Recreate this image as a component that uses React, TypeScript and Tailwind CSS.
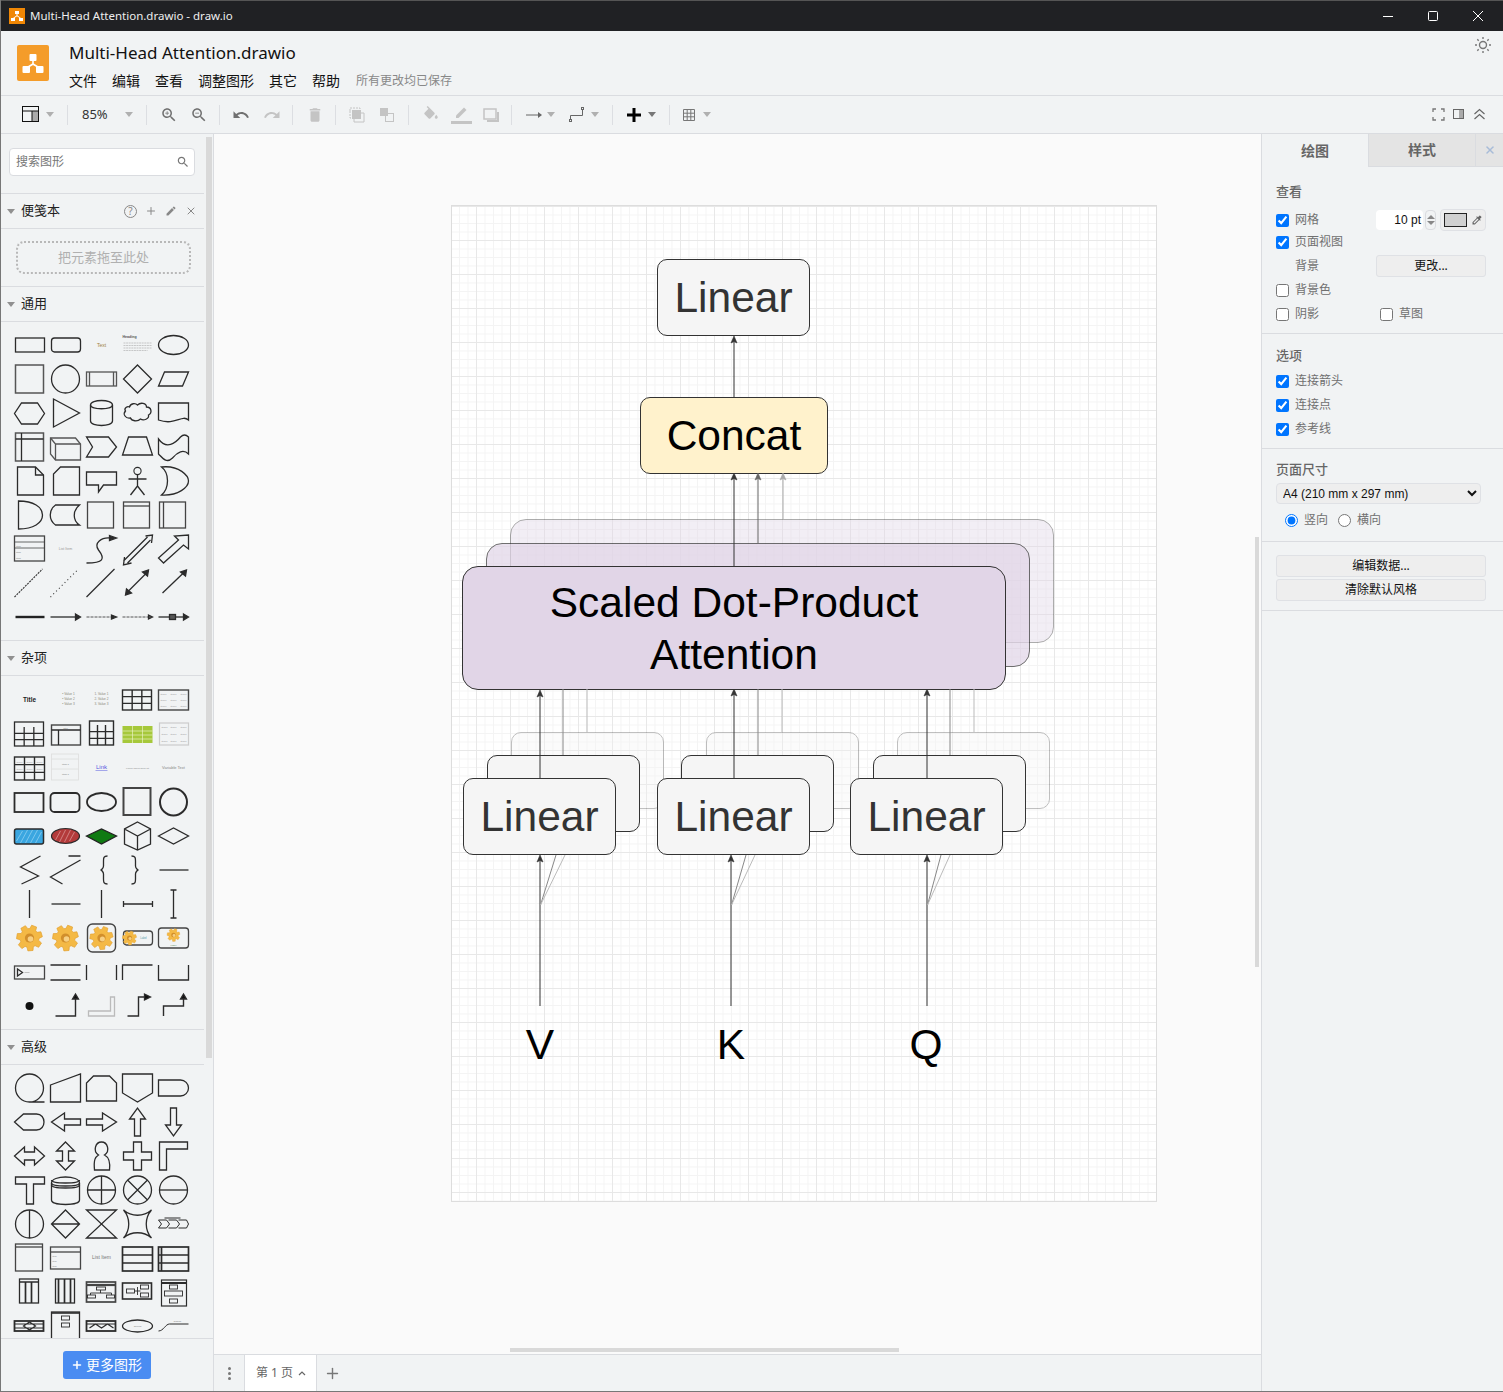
import type { ReactNode } from "react"
import { Plus, X } from "lucide-react"

const Ic = ({ d, c = "#707070", size = 18 }: { d: string; c?: string; size?: number }) => (
  <svg width={size} height={size} viewBox="0 0 24 24" fill={c}><path d={d} /></svg>
)

const Caret = ({ c = "border-t-[#b0b0b0]", className = "" }: { c?: string; className?: string }) => (
  <div className={`h-0 w-0 shrink-0 border-x-4 border-t-[5px] border-x-transparent ${c} ${className}`} />
)

const Sep = ({ className = "" }: { className?: string }) => <div className={`h-5 w-px shrink-0 bg-[#dcdee2] ${className}`} />

const Btn = ({ children, className = "" }: { children: ReactNode; className?: string }) => (
  <div className={`flex h-6 w-[30px] shrink-0 items-center justify-center ${className}`}>{children}</div>
)

const P = ({ d, w = 1.3, c = "#2b2b2b", f = "none" }: { d: string; w?: number; c?: string; f?: string }) => (
  <path d={d} stroke={c} strokeWidth={w} fill={f} />
)
const T = ({ x, y, s = 4, c = "#777", b = false, children }: { x: number; y: number; s?: number; c?: string; b?: boolean; children: ReactNode }) => (
  <text x={x} y={y} fontSize={s} fill={c} fontWeight={b ? 700 : 400} textAnchor="middle" fontFamily="Liberation Sans">{children}</text>
)
const Rc = ({ x, y, w, h, r = 0, sw = 1.3, f = "none", c = "#2b2b2b" }: { x: number; y: number; w: number; h: number; r?: number; sw?: number; f?: string; c?: string }) => (
  <rect x={x} y={y} width={w} height={h} rx={r} stroke={c} strokeWidth={sw} fill={f} />
)

const gearPath = () => {
  let d = ""
  for (let i = 0; i < 7; i++) {
    const a = (i * 2 * Math.PI) / 7 - 0.3
    const pts: [number, number][] = [[a - 0.34, 9.5], [a - 0.2, 13], [a + 0.2, 13], [a + 0.34, 9.5]]
    pts.forEach(([t, r], j) => {
      d += `${i === 0 && j === 0 ? "M" : "L"}${(18 + r * Math.cos(t)).toFixed(1)} ${(17 + r * Math.sin(t)).toFixed(1)}`
    })
  }
  return d + "Z"
}
const Gear = ({ t = "" }: { t?: string }) => (
  <g transform={t}>
    <path d={gearPath()} fill="#f4b945" stroke="#e3a02f" strokeWidth={0.7} />
    <circle cx={18} cy={17} r={4.6} fill="#d28f2b" />
    <circle cx={19} cy={18} r={2.8} fill="#f7d083" />
  </g>
)

const Grid3 = ({ x, y, w, h, sw = 1.3, top = 0 }: { x: number; y: number; w: number; h: number; sw?: number; top?: number }) => (
  <>
    <Rc x={x} y={y} w={w} h={h} sw={sw} />
    <P w={sw} d={`M${x + w / 3} ${y + top}V${y + h}M${x + (2 * w) / 3} ${y + top}V${y + h}M${x} ${y + top + (h - top) / 3}H${x + w}M${x} ${y + top + (2 * (h - top)) / 3}H${x + w}`} />
  </>
)

const general: ReactNode[] = [
  <Rc x={4} y={10} w={29} h={14} />,
  <Rc x={4} y={10} w={29} h={14} r={3} />,
  <T x={18} y={19} s={5} c="#a08040">Text</T>,
  <><T x={10} y={10} s={3.6} c="#555" b>Heading</T><path d="M4 15H32M4 17.5H32M4 20H32M4 22.5H28" stroke="#aaa" strokeWidth={0.6} strokeDasharray="2 0.6" /></>,
  <ellipse cx={18} cy={17} rx={15} ry={9.5} stroke="#2b2b2b" strokeWidth={1.3} fill="none" />,

  <Rc x={4} y={3} w={28} h={28} sw={1.5} c="#555" />,
  <circle cx={18} cy={17} r={14} stroke="#2b2b2b" strokeWidth={1.3} fill="none" />,
  <><Rc x={3} y={10} w={30} h={14} c="#555" /><P d="M6 10V24M30 10V24" c="#555" /></>,
  <P d="M18 3L32 17L18 31L4 17Z" />,
  <P d="M9 10H33L27 24H3Z" />,

  <P d="M10 7H26L33 17.5L26 28H10L3 17.5Z" />,
  <P d="M6 3L32 17L6 31Z" />,
  <><P d="M7 9C7 3 29 3 29 9V25C29 31 7 31 7 25Z" /><P d="M7 9C7 14 29 14 29 9" /></>,
  <P d="M10 11C11 7 16 7 18 9C21 6 27 7 27 11C32 11 33 17 29 19C30 23 24 25 21 23C18 26 12 25 11 22C6 23 3 18 6 15C4 12 8 10 10 11Z" />,
  <P d="M3 7H33V24C26 18 20 30 3 24Z" />,

  <><Rc x={4} y={3} w={28} h={28} sw={1.5} c="#555" /><P d="M4 9H32M10 3V31" /></>,
  <><P d="M3 8H28L33 14V30H8L3 24Z" c="#555" /><P d="M3 8L8 14V30M8 14H33" c="#555" /></>,
  <P d="M3 7H25L33 17L25 27H3L9 17Z" />,
  <P d="M9 7H27L33 25H3Z" />,
  <P d="M3 9C11 20 20 13 25 7C28 4 31 5 33 7V24C28 19 22 22 17 28C11 34 7 28 3 24Z" />,

  <><P d="M6 3H24L32 11V31H6Z" /><P d="M24 3V11H32" /></>,
  <P d="M13 3H32V31H6V10Z" />,
  <P d="M3 8H33V21H20L15 28V21H3Z" />,
  <><circle cx={18} cy={7} r={3.6} stroke="#2b2b2b" strokeWidth={1.1} fill="none" /><P d="M18 11V22M9 15H27M18 22L11 31M18 22L25 31" /></>,
  <P d="M6 3C24 1 33 12 33 17C33 23 23 32 6 31C14 24 14 9 6 3Z" />,

  <P d="M7 3C22 3 31 9 31 17C31 25 22 31 7 31Z" />,
  <P d="M8 7H32C25 13 25 22 32 27H8C1 22 1 12 8 7Z" />,
  <Rc x={4} y={4} w={26} h={26} c="#444" />,
  <><Rc x={4} y={4} w={26} h={26} c="#444" /><P d="M4 8H30" c="#444" /></>,
  <><Rc x={4} y={4} w={26} h={26} c="#444" /><P d="M8 4V30" c="#444" /></>,

  <><Rc x={3} y={4} w={30} h={25} c="#444" /><P d="M3 10H33M3 16H33" c="#444" w={0.8} /><T x={7} y={15} s={2.5}>Item</T><T x={7} y={21} s={2.5}>Item</T><T x={7} y={27} s={2.5}>Item</T></>,
  <T x={18} y={18} s={3.6} c="#999">List Item</T>,
  <><P d="M3 31C20 31 22 27 15 18C10 11 18 5 27 6" /><P d="M26 3.5L33 6L26 8.5Z" f="#2b2b2b" /></>,
  <><P d="M4 29L28 5M8 31L31 8M5 25L4 33L12 31M26 4L33 3L32 11" /></>,
  <P d="M8 31L3 26L23 8L19 4L33 3L33 17L28 13Z" />,

  <path d="M3 31L31 3" stroke="#333" strokeWidth={1.1} strokeDasharray="2 1" />,
  <path d="M3 31L31 3" stroke="#333" strokeWidth={1.1} strokeDasharray="1 3" />,
  <P d="M3 31L31 3" />,
  <><P d="M7 27L29 5" /><P d="M29 4L28 10L23 6ZM6 29L7 23L12 27Z" f="#2b2b2b" /></>,
  <><P d="M7 27L30 5" /><P d="M31 4L30 10L25 6Z" f="#2b2b2b" /></>,

  <P d="M4 17H33" w={2.4} c="#222" />,
  <><P d="M3 17H29" /><P d="M28 14L33 17L28 20Z" f="#2b2b2b" /></>,
  <><path d="M3 17H29" stroke="#444" strokeWidth={0.9} strokeDasharray="3 1" /><P d="M28 15L33 17L28 19Z" f="#2b2b2b" /></>,
  <><path d="M3 17H29" stroke="#444" strokeWidth={0.9} strokeDasharray="3 1" /><P d="M29 15L33 17L29 19Z" f="#555" /></>,
  <><P d="M3 17H29" /><Rc x={14} y={14.5} w={6} h={5} f="#555" /><P d="M28 14L33 17L28 20Z" f="#2b2b2b" /></>,
]

const tableText = (x: number, y: number) => <T x={x} y={y} s={2.2} c="#888">Item 1</T>

const misc: ReactNode[] = [
  <T x={18} y={19} s={6.4} c="#222" b>Title</T>,
  <><T x={21} y={12} s={3.2} c="#887">• Value 1</T><T x={21} y={17} s={3.2} c="#887">• Value 2</T><T x={21} y={22} s={3.2} c="#887">• Value 3</T></>,
  <><T x={18} y={12} s={3.2} c="#887">1. Value 1</T><T x={18} y={17} s={3.2} c="#887">2. Value 2</T><T x={18} y={22} s={3.2} c="#887">3. Value 3</T></>,
  <Grid3 x={3} y={7} w={29} h={20} sw={1.4} />,
  <><Rc x={3} y={7} w={30} h={20} sw={1.4} c="#444" />{tableText(8, 12)}{tableText(18, 12)}{tableText(28, 12)}{tableText(8, 18)}{tableText(18, 18)}{tableText(28, 18)}{tableText(8, 24)}{tableText(18, 24)}{tableText(28, 24)}</>,

  <Grid3 x={3} y={5} w={29} h={24} top={5} sw={1.3} />,
  <><Rc x={4} y={8} w={29} h={20} sw={1.4} c="#444" /><P d="M4 13H33M11 13V28" /><T x={18} y={12} s={2.5}>Title</T></>,
  <Grid3 x={6} y={4} w={24} h={24} top={4} sw={1.4} />,
  <><rect x={3} y={9} width={30} height={17} fill="#a6c83a" /><P d="M3 14H33M3 18H33M3 22H33M13 9V26M23 9V26" c="#e8f0c0" w={0.7} /></>,
  <><Rc x={4} y={6} w={29} h={22} sw={1.2} c="#ccc" />{tableText(9, 11)}{tableText(18, 11)}{tableText(28, 11)}{tableText(9, 18)}{tableText(18, 18)}{tableText(28, 18)}{tableText(9, 25)}{tableText(18, 25)}{tableText(28, 25)}</>,

  <><Grid3 x={3} y={6} w={30} h={23} sw={1.4} />{tableText(8, 12)}{tableText(18, 12)}{tableText(28, 12)}{tableText(8, 19)}{tableText(18, 19)}{tableText(28, 19)}</>,
  <><Rc x={4} y={3} w={27} h={26} c="#ddd" sw={0.8} /><P d="M4 8H31M4 18H31" c="#ddd" w={0.8} /><T x={18} y={14} s={2.5}>Item 1</T><T x={18} y={24} s={2.5}>Item 1</T></>,
  <><T x={18} y={18} s={6} c="#5558e0">Link</T><P d="M12 19.5H24" c="#5558e0" w={0.5} /></>,
  <T x={18} y={18} s={2.4} c="#888">Lorem ipsum dolor sit</T>,
  <T x={18} y={18} s={4} c="#888">Variable Text</T>,

  <Rc x={3} y={8} w={29} h={19} sw={1.8} />,
  <Rc x={3} y={8} w={29} h={19} r={4} sw={1.8} />,
  <ellipse cx={18} cy={17} rx={14.5} ry={9} stroke="#2b2b2b" strokeWidth={1.8} fill="none" />,
  <Rc x={4} y={3} w={27} h={27} sw={2} c="#444" />,
  <circle cx={18} cy={17} r={13.5} stroke="#2b2b2b" strokeWidth={2} fill="none" />,

  <><Rc x={3} y={10} w={29} h={15} r={2} f="#3aa6e0" sw={1.5} /><P d="M5 22L11 12M9 24L16 11M14 24L21 11M19 24L26 11M24 24L30 13" c="#a9dcf5" w={0.6} /></>,
  <><ellipse cx={18} cy={17} rx={14} ry={7.5} stroke="#2b2b2b" strokeWidth={1.2} fill="#b33a3a" /><P d="M8 21L13 12M12 23L18 11M17 23L23 11M22 22L27 13" c="#e8b0b0" w={0.6} /></>,
  <P d="M3 17L18 10L33 17L18 25Z" f="#0f7a12" c="#222" />,
  <P d="M18 3L31 10V25L18 31L5 25V10ZM5 10L18 17L31 10M18 17V31" />,
  <P d="M3 17L18 9L33 17L18 25Z" />,

  <P d="M29 3L9 14L27 23L10 31" />,
  <P d="M33 3L21 3M33 7L3 24L15 31" />,
  <P d="M24 3C20 3 20 5 20 8V13C20 15 18 17 17 17C18 17 20 19 20 21V26C20 29 20 31 24 31" />,
  <P d="M12 3C16 3 16 5 16 8V13C16 15 18 17 19 17C18 17 16 19 16 21V26C16 29 16 31 12 31" />,
  <P d="M4 17H33" />,

  <P d="M18 3V31" />,
  <P d="M4 17H33" />,
  <P d="M18 3V31" />,
  <P d="M4 17H33M4 14V20M33 14V20" />,
  <P d="M18 3V31M15 3H21M15 31H21" />,

  <Gear />,
  <Gear />,
  <><Rc x={4} y={3} w={28} h={28} r={5} sw={1.4} c="#444" /><Gear t="translate(1.8 1.7) scale(0.9)" /></>,
  <><Rc x={4} y={10} w={29} h={14} r={3} sw={1.3} c="#444" /><Gear t="translate(0.1 7.65) scale(0.55)" /><T x={24} y={18} s={2.6} c="#59a">Label</T></>,
  <><Rc x={3} y={7} w={30} h={20} r={3} sw={1.3} c="#444" /><Gear t="translate(9 5.5) scale(0.5)" /><T x={18} y={25} s={2.4} c="#585">Label</T></>,

  <><Rc x={3} y={11} w={30} h={13} c="#444" sw={1.3} /><P d="M6 14V21L11 17.5Z" /><P d="M13 17.5H18" c="#aaa" w={0.7} /></>,
  <P d="M3 10H33M3 25H33" />,
  <P d="M3 10V25M33 10V25" />,
  <P d="M3 25V10H33" />,
  <P d="M3 10V25H33V10" />,

  <circle cx={18} cy={17} r={4} fill="#111" />,
  <><P d="M8 27H28V9" w={1.4} /><P d="M25 10L28 5L31 10Z" f="#111" /></>,
  <P d="M5 22H27V8H31V27H5Z" c="#bbb" />,
  <><P d="M8 27H19V8H26" w={1.4} /><P d="M25 5L31 8L25 11Z" f="#111" /></>,
  <><P d="M8 27V17H28V9" w={1.4} /><P d="M25 10L28 5L31 10Z" f="#111" /></>,
]

const advanced: ReactNode[] = [
  <P d="M18 31A14 14 0 1 1 18 3A14 14 0 1 1 18 31H33" />,
  <P d="M3 14L33 3V31H3Z" />,
  <P d="M10 5H26L33 12V30H3V12Z" />,
  <P d="M3 3H33V22L18 31L3 22Z" />,
  <P d="M3 9H25A8 8 0 0 1 25 25H3Z" />,

  <P d="M12 9H25C35 9 35 25 25 25H12L3 17Z" />,
  <P d="M33 14H17V8L4 17L17 26V20H33Z" />,
  <P d="M3 14H19V8L33 17L19 26V20H3Z" />,
  <P d="M15 31V14H10L18 3L26 14H21V31Z" />,
  <P d="M15 3V20H10L18 31L26 20H21V3Z" />,

  <P d="M3 17L13 8V13H23V8L33 17L23 26V21H13V26Z" />,
  <P d="M18 3L27 12H21V22H27L18 31L9 22H15V12H9Z" />,
  <P d="M11 31C10 20 12 18 15 16C9 12 12 3 18 3C24 3 27 12 21 16C25 18 27 22 26 31Z" />,
  <P d="M14 3H22V13H32V21H22V31H14V21H4V13H14Z" />,
  <P d="M4 31V3H32V10H11V31Z" />,

  <P d="M4 4H33V11H22V31H15V11H4Z" />,
  <><P d="M4 10C4 2 32 2 32 10V27C32 33 4 33 4 27Z" /><P d="M4 10C4 14 32 14 32 10M4 7C4 11 32 11 32 7M4 12C4 16 32 16 32 12" /></>,
  <><circle cx={18} cy={17} r={14} stroke="#2b2b2b" strokeWidth={1.3} fill="none" /><P d="M18 3V31M4 17H32" /></>,
  <><circle cx={18} cy={17} r={14} stroke="#2b2b2b" strokeWidth={1.3} fill="none" /><P d="M8 7L28 27M28 7L8 27" /></>,
  <><circle cx={18} cy={17} r={14} stroke="#2b2b2b" strokeWidth={1.3} fill="none" /><P d="M4 17H32" /></>,

  <><circle cx={18} cy={17} r={14} stroke="#2b2b2b" strokeWidth={1.3} fill="none" /><P d="M18 3V31" /></>,
  <P d="M18 3L32 17L18 31L4 17ZM4 17H32" />,
  <P d="M3 3H33L3 31H33Z" />,
  <P d="M4 3C12 10 24 10 32 3C25 11 25 23 32 31C24 24 12 24 4 31C11 23 11 11 4 3Z" />,
  <P d="M3 13H11L14 17L11 21H3L6 17ZM13 13H21L24 17L21 21H13M23 13H31L33 17L31 21H23M9 11H25" w={1} />,

  <><Rc x={4} y={3} w={27} h={27} c="#444" /><P d="M4 6H31" c="#444" /></>,
  <><Rc x={3} y={6} w={30} h={22} c="#444" /><P d="M3 11H33" c="#444" /><T x={7} y={16} s={2.2}>Item</T><T x={7} y={21} s={2.2}>Item</T><T x={7} y={26} s={2.2}>Item</T></>,
  <T x={18} y={18} s={5} c="#777">List Item</T>,
  <><Rc x={3} y={6} w={30} h={24} sw={1.7} /><P d="M3 14H33M3 22H33" w={1.7} /></>,
  <><Rc x={3} y={6} w={30} h={24} sw={1.7} /><P d="M3 14H33M3 22H33M6 6V30" w={1.7} /></>,

  <><Rc x={8} y={4} w={19} h={24} sw={1.3} /><P d="M8 7H27M14 7V28M20 7V28" w={1.7} /></>,
  <><Rc x={8} y={4} w={19} h={24} sw={1.3} /><P d="M11 4V28M17 4V28M23 4V28" w={1.7} /></>,
  <><Rc x={3} y={7} w={29} h={20} sw={1.7} c="#444" /><P d="M3 10H32" w={2.2} c="#444" /><Rc x={13} y={12} w={9} h={3} sw={0.9} /><P d="M17 15V18M7 20V18H28V20" w={0.9} /><Rc x={4} y={20} w={8} h={3} sw={0.9} /><Rc x={23} y={20} w={8} h={3} sw={0.9} /></>,
  <><Rc x={3} y={8} w={29} h={16} sw={1.6} /><Rc x={7} y={14} w={8} h={4} sw={0.9} /><Rc x={21} y={10} w={8} h={4} sw={0.9} /><Rc x={21} y={18} w={8} h={4} sw={0.9} /><P d="M15 16H21M18 12V20" w={0.9} /></>,
  <><Rc x={6} y={5} w={25} h={26} sw={1.2} /><P d="M6 8H31" w={2} /><Rc x={14} y={10} w={8} h={4} sw={0.9} /><Rc x={9} y={16} w={18} h={5} sw={0.9} /><Rc x={14} y={24} w={8} h={4} sw={0.9} /></>,

  <><Rc x={3} y={12} w={29} h={10} sw={1.8} /><P d="M3 15H32M3 19H32M12 17L18 13L24 17L18 21Z" w={1.2} /></>,
  <><Rc x={4} y={3} w={28} h={30} sw={1.3} /><P d="M4 4H32" w={1.6} /><Rc x={14} y={7} w={8} h={4} sw={0.9} /><Rc x={14} y={14} w={8} h={4} sw={0.9} /></>,
  <><Rc x={3} y={12} w={29} h={10} sw={1.8} /><P d="M3 15H32M6 19L12 15L18 19L24 15L30 19" w={1.2} /></>,
  <><ellipse cx={18} cy={17} rx={15} ry={6} stroke="#2b2b2b" strokeWidth={1.3} fill="none" /><T x={18} y={18} s={2.4}>Curved</T></>,
  <><P d="M3 22C8 22 10 15 14 15H33" w={1} /><T x={22} y={13} s={2.4}>branch</T></>,
]

const Palette = ({ items, className = "" }: { items: ReactNode[]; className?: string }) => (
  <div className={`grid w-[180px] grid-cols-[repeat(5,36px)] auto-rows-[34px] ml-[10px] ${className}`}>
    {items.map((s, i) => (
      <svg key={i} width={36} height={34} viewBox="-0.5 0 36 34" className="block">{s}</svg>
    ))}
  </div>
)

const SectionHead = ({ title, children }: { title: string; children?: ReactNode }) => (
  <div className="flex h-[35px] shrink-0 items-center border-b border-[#dadce0] pl-[6px] text-[13px] text-[#222]">
    <Caret c="border-t-[#909090]" className="mr-[6px]" />
    <span>{title}</span>
    {children}
  </div>
)

const Sidebar = () => (
  <aside className="flex w-[213px] shrink-0 flex-col border-r border-[#dadce0]">
    <div className="flex min-h-0 flex-1 overflow-hidden">
      <div className="w-[203px] shrink-0 overflow-hidden">
        <div className="h-[60px] border-b border-[#dadce0] pl-[8px] pt-[14px]">
          <div className="flex h-7 w-[186px] items-center justify-between rounded border border-[#dadce0] bg-white pl-[6px] pr-[4px] text-xs text-[#777]">
            <span>搜索图形</span>
            <Ic size={14} c="#777" d="M15.5 14h-.79l-.28-.27C15.41 12.59 16 11.11 16 9.5 16 5.91 13.09 3 9.5 3S3 5.91 3 9.5 5.91 16 9.5 16c1.61 0 3.09-.59 4.23-1.57l.27.28v.79l5 4.99L20.49 19l-4.99-5zm-6 0C7.01 14 5 11.99 5 9.5S7.01 5 9.5 5 14 7.01 14 9.5 11.99 14 9.5 14z" />
          </div>
        </div>
        <SectionHead title="便笺本">
          <div className="ml-auto flex items-center gap-[8px] pr-[7px] text-[#888]">
            <div className="flex h-[13px] w-[13px] items-center justify-center rounded-full border border-[#888] text-[10px] leading-none">?</div>
            <Plus size={12} strokeWidth={2} />
            <Ic size={12} c="#888" d="M3 17.25V21h3.75L17.81 9.94l-3.75-3.75L3 17.25zM20.71 7.04c.39-.39.39-1.02 0-1.41l-2.34-2.34c-.39-.39-1.02-.39-1.41 0l-1.83 1.83 3.75 3.75 1.83-1.83z" />
            <X size={12} strokeWidth={2} />
          </div>
        </SectionHead>
        <div className="h-[58px] border-b border-[#dadce0] pl-[15px] pt-[12px]">
          <div className="flex h-[33px] w-[175px] items-center justify-center rounded-lg border-2 border-dotted border-[#b8b8b8] pt-[1px] text-[13px] text-[#b0b0b0]">把元素拖至此处</div>
        </div>
        <SectionHead title="通用" />
        <div className="h-[319px] border-b border-[#dadce0] pt-[6px]"><Palette items={general} /></div>
        <SectionHead title="杂项" />
        <div className="h-[354px] border-b border-[#dadce0] pt-[7px]"><Palette items={misc} /></div>
        <SectionHead title="高级" />
        <div className="pt-[6px]"><Palette items={advanced} /></div>
      </div>
      <div className="flex-1 pl-[2px] pt-[3px]">
        <div className="h-[921px] w-[6px] bg-[#d9d9d9]" />
      </div>
    </div>
    <div className="flex h-[53px] shrink-0 items-center justify-center border-t border-[#dadce0] pr-[1px]">
      <div className="flex h-7 w-[88px] items-center justify-center gap-[3px] rounded-[3px] bg-[#4a8cf2] text-sm text-white">
        <Plus size={12} strokeWidth={3} />
        <span>更多图形</span>
      </div>
    </div>
  </aside>
)

const Box = ({ className, children }: { className: string; children?: ReactNode }) => (
  <div className={`absolute flex items-center justify-center border text-center font-['Liberation_Sans',sans-serif] text-[42.5px] leading-[52px] ${className}`}>{children}</div>
)

const linear = "h-[77px] w-[153px] rounded-[10px] border-[#333] bg-[#f5f5f5] text-[#333]"
const scaled = "h-[124px] w-[544px] rounded-[16px] border-[#333] bg-[#e1d5e7] text-black"

const Arrow = ({ x, y1, y2, c = "#333" }: { x: number; y1: number; y2: number; c?: string }) => (
  <g>
    <path d={`M${x} ${y1}V${y2 + 4}`} stroke={c} strokeWidth={1} fill="none" />
    <path d={`M${x} ${y2}L${x - 3} ${y2 + 7}L${x} ${y2 + 5.5}L${x + 3} ${y2 + 7}Z`} fill={c} stroke={c} strokeWidth={0.6} />
  </g>
)

const Diagram = () => (
  <div className="absolute left-[238px] top-[72px] h-[995px] w-[704px] bg-white bg-[linear-gradient(#e8e8e8_1px,transparent_1px),linear-gradient(90deg,#e8e8e8_1px,transparent_1px),linear-gradient(#f4f4f4_1px,transparent_1px),linear-gradient(90deg,#f4f4f4_1px,transparent_1px)] bg-[size:34px_34px,34px_34px,8.5px_8.5px,8.5px_8.5px] bg-[position:0_0,24px_0,0_0,7px_0] shadow-[0_0_0_1px_#dddddd]">
    <Box className={`${linear} left-[205px] top-[53px]`}>Linear</Box>
    <Box className="left-[188px] top-[191px] h-[77px] w-[188px] rounded-[10px] border-[#333] bg-[#fff2cc] text-black">Concat</Box>

    <Box className={`${scaled} left-[58px] top-[313px] opacity-40`} />
    <Box className={`${scaled} left-[34px] top-[337px] opacity-70`} />
    <Box className={`${scaled} left-[10px] top-[360px] pt-[2px]`}>Scaled Dot-Product<br />Attention</Box>

    <Box className={`${linear} left-[59px] top-[526px] opacity-30`} />
    <Box className={`${linear} left-[35px] top-[549px]`} />
    <Box className={`${linear} left-[11px] top-[572px]`}>Linear</Box>
    <Box className={`${linear} left-[254px] top-[526px] opacity-30`} />
    <Box className={`${linear} left-[229px] top-[549px]`} />
    <Box className={`${linear} left-[205px] top-[572px]`}>Linear</Box>
    <Box className={`${linear} left-[445px] top-[526px] opacity-30`} />
    <Box className={`${linear} left-[421px] top-[549px]`} />
    <Box className={`${linear} left-[398px] top-[572px]`}>Linear</Box>

    <svg className="absolute inset-0 h-full w-full" viewBox="452 206 704 995">
      <Arrow x={734} y1={397} y2={336} />
      <Arrow x={734} y1={566} y2={473} />
      <Arrow x={758} y1={543} y2={473} c="#666" />
      <Arrow x={783} y1={519} y2={473} c="#aaa" />
      <Arrow x={540} y1={778} y2={690} />
      <path d="M563 755V689" stroke="#888" fill="none" />
      <path d="M587 732V689" stroke="#bbb" fill="none" />
      <Arrow x={734} y1={778} y2={689} />
      <path d="M758 755V689" stroke="#888" fill="none" />
      <path d="M782 732V689" stroke="#bbb" fill="none" />
      <Arrow x={927} y1={778} y2={689} />
      <path d="M950 755V689" stroke="#888" fill="none" />
      <path d="M974 732V689" stroke="#bbb" fill="none" />
      <Arrow x={540} y1={1006} y2={855} />
      <path d="M540.5 905L556 855" stroke="#888" fill="none" />
      <path d="M540.5 905L565 855" stroke="#bbb" fill="none" />
      <Arrow x={731} y1={1006} y2={855} />
      <path d="M731.5 905L746 855" stroke="#888" fill="none" />
      <path d="M731.5 905L755 855" stroke="#bbb" fill="none" />
      <Arrow x={927} y1={1006} y2={855} />
      <path d="M927.5 905L941 855" stroke="#888" fill="none" />
      <path d="M927.5 905L950 855" stroke="#bbb" fill="none" />
    </svg>

    <div className="absolute left-[38px] top-[813px] flex h-[52px] w-[100px] items-center justify-center font-['Liberation_Sans',sans-serif] text-[42.5px] text-black">V</div>
    <div className="absolute left-[229px] top-[813px] flex h-[52px] w-[100px] items-center justify-center font-['Liberation_Sans',sans-serif] text-[42.5px] text-black">K</div>
    <div className="absolute left-[424px] top-[813px] flex h-[52px] w-[100px] items-center justify-center font-['Liberation_Sans',sans-serif] text-[42.5px] text-black">Q</div>
  </div>
)

const Row = ({ children, className = "" }: { children: ReactNode; className?: string }) => (
  <div className={`flex items-center ${className}`}>{children}</div>
)

const Check = ({ label, on = false, className = "" }: { label: string; on?: boolean; className?: string }) => (
  <label className={`flex items-center gap-[6px] ${className}`}>
    <input type="checkbox" defaultChecked={on} className="m-0 h-[13px] w-[13px]" />
    <span>{label}</span>
  </label>
)

const flatBtn = "flex h-[22px] items-center justify-center rounded-[3px] border border-[#dfe1e5] bg-[#eeeeee] text-xs text-[#111]"

const RightPanel = () => (
  <aside className="w-[242px] shrink-0 border-l border-[#dadce0] text-xs text-[#707070]">
    <div className="flex h-[33px] text-sm font-semibold text-[#666]">
      <div className="flex w-[106px] items-center justify-center">绘图</div>
      <div className="flex w-[107px] items-center justify-center border-b border-l border-[#dadce0] bg-[#e4e4e4]">样式</div>
      <div className="flex flex-1 items-center justify-center border-b border-l border-[#dadce0] bg-[#e4e4e4] text-[#a8bcd8]"><X size={12} strokeWidth={3} /></div>
    </div>
    <section className="h-[167px] border-b border-[#dadce0] pl-[14px] pt-[17px]">
      <div className="h-[14px] text-[13px] font-medium leading-[14px] text-[#666]">查看</div>
      <Row className="mt-[10px] h-6">
        <Check label="网格" on className="w-[100px]" />
        <div className="flex h-5 w-[47px] items-center justify-end rounded bg-white pr-[2px] font-['Liberation_Sans',sans-serif] text-xs text-[#111]">10 pt</div>
        <div className="ml-[2px] flex h-5 w-[11px] flex-col items-center justify-center gap-[2px] rounded border border-[#dadce0]">
          <div className="h-0 w-0 border-x-[4px] border-b-[4px] border-x-transparent border-b-[#888]" />
          <div className="h-0 w-0 border-x-[4px] border-t-[4px] border-x-transparent border-t-[#888]" />
        </div>
        <div className="ml-[4px] flex h-[22px] w-[46px] items-center gap-[4px] rounded border border-[#dfe1e5] bg-[#eeeeee] pl-[3px]">
          <div className="h-[14px] w-[23px] border border-[#222] bg-[#d0d0d0]" />
          <Ic size={12} c="#666" d="M20.71 5.63l-2.34-2.34c-.39-.39-1.02-.39-1.41 0l-3.12 3.12-1.93-1.91-1.41 1.41 1.42 1.42L3 16.25V21h4.75l8.92-8.92 1.42 1.42 1.41-1.41-1.92-1.92 3.12-3.12c.4-.4.4-1.03.01-1.42zM6.92 19L5 17.08l8.06-8.06 1.92 1.92L6.92 19z" />
        </div>
      </Row>
      <Row className="h-5"><Check label="页面视图" on /></Row>
      <Row className="h-7">
        <span className="w-[100px] pl-[19px]">背景</span>
        <div className={`${flatBtn} w-[110px]`}>更改...</div>
      </Row>
      <Row className="h-5"><Check label="背景色" /></Row>
      <Row className="h-7">
        <Check label="阴影" className="w-[104px]" />
        <Check label="草图" />
      </Row>
    </section>
    <section className="h-[115px] border-b border-[#dadce0] pl-[14px] pt-[14px]">
      <div className="h-[14px] text-[13px] font-medium leading-[14px] text-[#666]">选项</div>
      <Row className="mt-[7px] h-6"><Check label="连接箭头" on /></Row>
      <Row className="h-6"><Check label="连接点" on /></Row>
      <Row className="h-6"><Check label="参考线" on /></Row>
    </section>
    <section className="h-[93px] border-b border-[#dadce0] pl-[14px] pt-[13px]">
      <div className="h-[14px] text-[13px] font-medium leading-[14px] text-[#666]">页面尺寸</div>
      <select className="mt-[7px] block h-[21px] w-[205px] rounded border border-[#dfe1e5] bg-[#eeeeee] pl-[2px] font-['Liberation_Sans',sans-serif] text-xs text-[#111]">
        <option>A4 (210 mm x 297 mm)</option>
      </select>
      <Row className="mt-[5px] h-[22px] pl-[9px]">
        <label className="flex w-[53px] items-center gap-[6px]"><input type="radio" name="orient" defaultChecked className="m-0 h-[13px] w-[13px]" /><span>竖向</span></label>
        <label className="flex items-center gap-[6px]"><input type="radio" name="orient" className="m-0 h-[13px] w-[13px]" /><span>横向</span></label>
      </Row>
    </section>
    <section className="flex h-[69px] flex-col gap-[2px] border-b border-[#dadce0] pl-[14px] pt-[13px]">
      <div className={`${flatBtn} w-[210px]`}>编辑数据...</div>
      <div className={`${flatBtn} w-[210px]`}>清除默认风格</div>
    </section>
  </aside>
)

export default function App() {
  return (
    <div className="flex h-[1392px] w-[1503px] flex-col overflow-hidden border-b border-l border-[#777] bg-[#f1f3f4] font-['Noto_Sans','Noto_Sans_CJK_SC',sans-serif]">
      <div className="flex h-[31px] shrink-0 items-center border-t border-[#555] bg-[#202124] pl-[8px] text-[11.5px] text-[#eee]">
        <svg width={16} height={16} viewBox="0 0 16 16" className="mr-[5px]">
          <rect width={16} height={16} fill="#f08705" />
          <path d="M6 3h4v3H8.5v1.5L12 10h2v3h-4v-3h.6L8 8.2 5.4 10H6v3H2v-3h2l3.5-2.5V6H6z" fill="#fff" />
        </svg>
        <span>Multi-Head Attention.drawio - draw.io</span>
        <div className="ml-auto flex pr-[3px]">
          <div className="flex w-[45px] justify-center"><svg width={12} height={12} viewBox="0 0 12 12"><path d="M1 6.5H11" stroke="#fff" /></svg></div>
          <div className="flex w-[45px] justify-center"><svg width={12} height={12} viewBox="0 0 12 12"><rect x={1.5} y={1.5} width={9} height={9} rx={1} stroke="#fff" fill="none" /></svg></div>
          <div className="flex w-[45px] justify-center"><svg width={12} height={12} viewBox="0 0 12 12"><path d="M1 1L11 11M11 1L1 11" stroke="#fff" /></svg></div>
        </div>
      </div>

      <header className="flex h-[65px] shrink-0 border-b border-[#dadce0]">
        <div className="ml-[16px] mt-[14px] flex h-9 w-8 items-center justify-center rounded-[2px] bg-[#f49c2a]">
          <svg width={24} height={24} viewBox="0 0 24 24">
            <path d="M12 10V13M12 13L5.5 17M12 13L18.5 17" stroke="#fff" strokeWidth={1.6} fill="none" />
            <rect x={8.5} y={3} width={7} height={7} rx={1} fill="#fff" />
            <rect x={1.5} y={15} width={7.5} height={7} rx={1} fill="#fff" />
            <rect x={15} y={15} width={7.5} height={7} rx={1} fill="#fff" />
          </svg>
        </div>
        <div className="ml-[20px] flex flex-col">
          <div className="mt-[9px] text-[17px] leading-[25px] text-[#111]">Multi-Head Attention.drawio</div>
          <div className="mt-[6px] flex items-center text-[#111]">
            <span className="text-sm leading-5">文件</span>
            <span className="ml-[15px] text-sm leading-5">编辑</span>
            <span className="ml-[15px] text-sm leading-5">查看</span>
            <span className="ml-[15px] text-sm leading-5">调整图形</span>
            <span className="ml-[15px] text-sm leading-5">其它</span>
            <span className="ml-[15px] text-sm leading-5">帮助</span>
            <span className="ml-[16px] text-xs leading-5 text-[#888]">所有更改均已保存</span>
          </div>
        </div>
        <div className="ml-auto pr-[11px] pt-[5px]">
          <svg width={18} height={18} viewBox="0 0 18 18" fill="none" stroke="#777">
            <circle cx={9} cy={9} r={3.5} strokeWidth={1.4} />
            <path d="M9 1V3M9 15V17M1 9H3M15 9H17M3.3 3.3L4.7 4.7M13.3 13.3L14.7 14.7M3.3 14.7L4.7 13.3M13.3 4.7L14.7 3.3" strokeWidth={1.4} />
          </svg>
        </div>
      </header>

      <div className="flex h-[38px] shrink-0 items-center border-b border-[#dadce0] pl-[15px]">
        <Btn>
          <svg width={18} height={17} viewBox="0 0 18 17"><rect x={0.5} y={0.5} width={16} height={15} fill="none" stroke="#111" /><rect x={10} y={5} width={6} height={10} fill="#aaa" /><path d="M1 5H16M10 5V15" stroke="#111" /></svg>
        </Btn>
        <Caret />
        <Sep className="ml-[13px]" />
        <span className="ml-[14px] w-[26px] text-[13px] text-[#333]">85%</span>
        <Caret className="ml-[17px]" />
        <Sep className="ml-[13px]" />
        <Btn className="ml-[7px]"><Ic d="M15.5 14h-.79l-.28-.27C15.41 12.59 16 11.11 16 9.5 16 5.91 13.09 3 9.5 3S3 5.91 3 9.5 5.91 16 9.5 16c1.61 0 3.09-.59 4.23-1.57l.27.28v.79l5 4.99L20.49 19l-4.99-5zm-6 0C7.01 14 5 11.99 5 9.5S7.01 5 9.5 5 14 7.01 14 9.5 11.99 14 9.5 14zM12 10h-2v2H9v-2H7V9h2V7h1v2h2v1z" /></Btn>
        <Btn><Ic d="M15.5 14h-.79l-.28-.27C15.41 12.59 16 11.11 16 9.5 16 5.91 13.09 3 9.5 3S3 5.91 3 9.5 5.91 16 9.5 16c1.61 0 3.09-.59 4.23-1.57l.27.28v.79l5 4.99L20.49 19l-4.99-5zM7 9h5v1H7zm2.5 5C7.01 14 5 11.99 5 9.5S7.01 5 9.5 5 14 7.01 14 9.5 11.99 14 9.5 14z" /></Btn>
        <Sep className="ml-[5px]" />
        <Btn className="ml-[6px]"><Ic d="M12.5 8c-2.65 0-5.05.99-6.9 2.6L2 7v9h9l-3.62-3.62c1.39-1.16 3.16-1.88 5.12-1.88 3.54 0 6.55 2.31 7.6 5.5l2.37-.78C21.08 11.03 17.15 8 12.5 8z" /></Btn>
        <Btn className="ml-[1px]"><Ic c="#c4c4c4" d="M18.4 10.6C16.55 8.99 14.15 8 11.5 8c-4.65 0-8.58 3.03-9.96 7.22L3.9 16c1.05-3.19 4.05-5.5 7.6-5.5 1.95 0 3.73.72 5.12 1.88L13 16h9V7l-3.6 3.6z" /></Btn>
        <Sep className="ml-[5px]" />
        <Btn className="ml-[7px]"><Ic c="#c4c4c4" d="M6 19c0 1.1.9 2 2 2h8c1.1 0 2-.9 2-2V7H6v12zM19 4h-3.5l-1-1h-5l-1 1H5v2h14V4z" /></Btn>
        <Sep className="ml-[5px]" />
        <Btn className="ml-[6px]">
          <svg width={16} height={16} viewBox="0 0 16 16" fill="none" stroke="#c4c4c4"><path d="M1 4V1H11V4M1 4V11H4M1 4" strokeDasharray="2 1" /><rect x={3.5} y={3.5} width={8} height={8} fill="#c4c4c4" /><path d="M11 6H15V15H5V11" /></svg>
        </Btn>
        <Btn>
          <svg width={16} height={16} viewBox="0 0 16 16" fill="none" stroke="#c4c4c4"><rect x={1.5} y={1.5} width={7} height={7} fill="#c4c4c4" /><rect x={6.5} y={6.5} width={8} height={8} fill="#f1f3f4" /><rect x={6.5} y={6.5} width={2} height={2} fill="#c4c4c4" /></svg>
        </Btn>
        <Sep className="ml-[6px]" />
        <Btn className="ml-[7px]"><Ic c="#c4c4c4" d="M16.56 8.94L7.62 0 6.21 1.41l2.38 2.38-5.15 5.15c-.59.59-.59 1.54 0 2.12l5.5 5.5c.29.29.68.44 1.06.44s.77-.15 1.06-.44l5.5-5.5c.59-.58.59-1.53 0-2.12zM19 11.5s-2 2.17-2 3.5c0 1.1.9 2 2 2s2-.9 2-2c0-1.33-2-3.5-2-3.5z" /></Btn>
        <Btn>
          <svg width={21} height={18} viewBox="0 0 21 18" fill="#c4c4c4"><path d="M5 12V9.5L13 1.5L15.5 4L7.5 12Z" /><rect y={15} width={21} height={3} /></svg>
        </Btn>
        <Btn>
          <svg width={16} height={14} viewBox="0 0 16 14" fill="none"><rect x={1} y={1} width={12} height={10} stroke="#c4c4c4" strokeWidth={1.5} /><path d="M15 4V13H4" stroke="#c4c4c4" strokeWidth={2} /></svg>
        </Btn>
        <Sep className="ml-[5px]" />
        <Btn className="ml-[7px]">
          <svg width={16} height={10} viewBox="0 0 16 10"><path d="M0 5H14" stroke="#666" /><path d="M12 2L16 5L12 8Z" fill="#666" /></svg>
        </Btn>
        <Caret className="-ml-[2px]" />
        <Btn className="ml-[7px]">
          <svg width={16} height={16} viewBox="0 0 16 16" fill="none" stroke="#666"><rect x={0.5} y={12.5} width={2} height={2} /><rect x={12.5} y={0.5} width={2} height={2} /><path d="M1.5 12.5V8.5H13.5V2.5" /></svg>
        </Btn>
        <Caret className="-ml-[1px]" />
        <Sep className="ml-[13px]" />
        <Btn className="ml-[6px]">
          <svg width={14} height={14} viewBox="0 0 14 14"><path d="M7 0V14M0 7H14" stroke="#000" strokeWidth={3} /></svg>
        </Btn>
        <Caret c="border-t-[#777]" className="-ml-[1px]" />
        <Sep className="ml-[13px]" />
        <Btn className="ml-[4px]">
          <svg width={14} height={14} viewBox="0 0 14 14" fill="none" stroke="#777"><path d="M1.5 1.5H12.5V12.5H1.5ZM1.5 5.2H12.5M1.5 8.8H12.5M5.2 1.5V12.5M8.8 1.5V12.5" /></svg>
        </Btn>
        <Caret className="-ml-[1px]" />
        <div className="ml-auto flex items-center gap-[8px] pr-[17px]">
          <svg width={13} height={13} viewBox="0 0 13 13" fill="none" stroke="#777" strokeWidth={1.3}><path d="M1 4V1H4M9 1H12V4M12 9V12H9M4 12H1V9" /></svg>
          <svg width={12} height={11} viewBox="0 0 12 11"><rect x={0.5} y={0.5} width={10} height={9} fill="none" stroke="#666" /><rect x={6} y={1} width={4} height={8} fill="#aaa" /></svg>
          <svg width={13} height={13} viewBox="0 0 13 13" fill="none" stroke="#666" strokeWidth={1.2}><path d="M1.5 6L6.5 1.5L11.5 6M1.5 11L6.5 6.5L11.5 11" /></svg>
        </div>
      </div>

      <div className="flex min-h-0 flex-1">
        <Sidebar />
        <main className="flex min-w-0 flex-1 flex-col bg-[#fafafa]">
          <div className="relative flex-1 overflow-hidden">
            <Diagram />
            <div className="absolute right-[2px] top-[403px] h-[430px] w-[4px] bg-[#d9d9d9]" />
            <div className="absolute bottom-[2px] left-[296px] h-[4px] w-[389px] bg-[#d9d9d9]" />
          </div>
          <div className="flex h-[37px] shrink-0 items-stretch border-t border-[#dadce0] bg-[#f1f3f4]">
            <div className="flex w-[30px] flex-col items-center justify-center gap-[2px]">
              <div className="h-[3px] w-[3px] rounded-full bg-[#777]" />
              <div className="h-[3px] w-[3px] rounded-full bg-[#777]" />
              <div className="h-[3px] w-[3px] rounded-full bg-[#777]" />
            </div>
            <div className="flex w-[73px] items-center justify-center gap-[5px] border-x border-[#dadce0] bg-white pl-[1px] text-xs text-[#666]">
              <span>第 1 页</span>
              <svg width={8} height={5} viewBox="0 0 8 5" fill="none" stroke="#666" strokeWidth={1.2}><path d="M1 4L4 1L7 4" /></svg>
            </div>
            <div className="flex w-[30px] items-center justify-center text-[#777]"><Plus size={17} strokeWidth={2} /></div>
          </div>
        </main>
        <RightPanel />
      </div>
    </div>
  )
}
